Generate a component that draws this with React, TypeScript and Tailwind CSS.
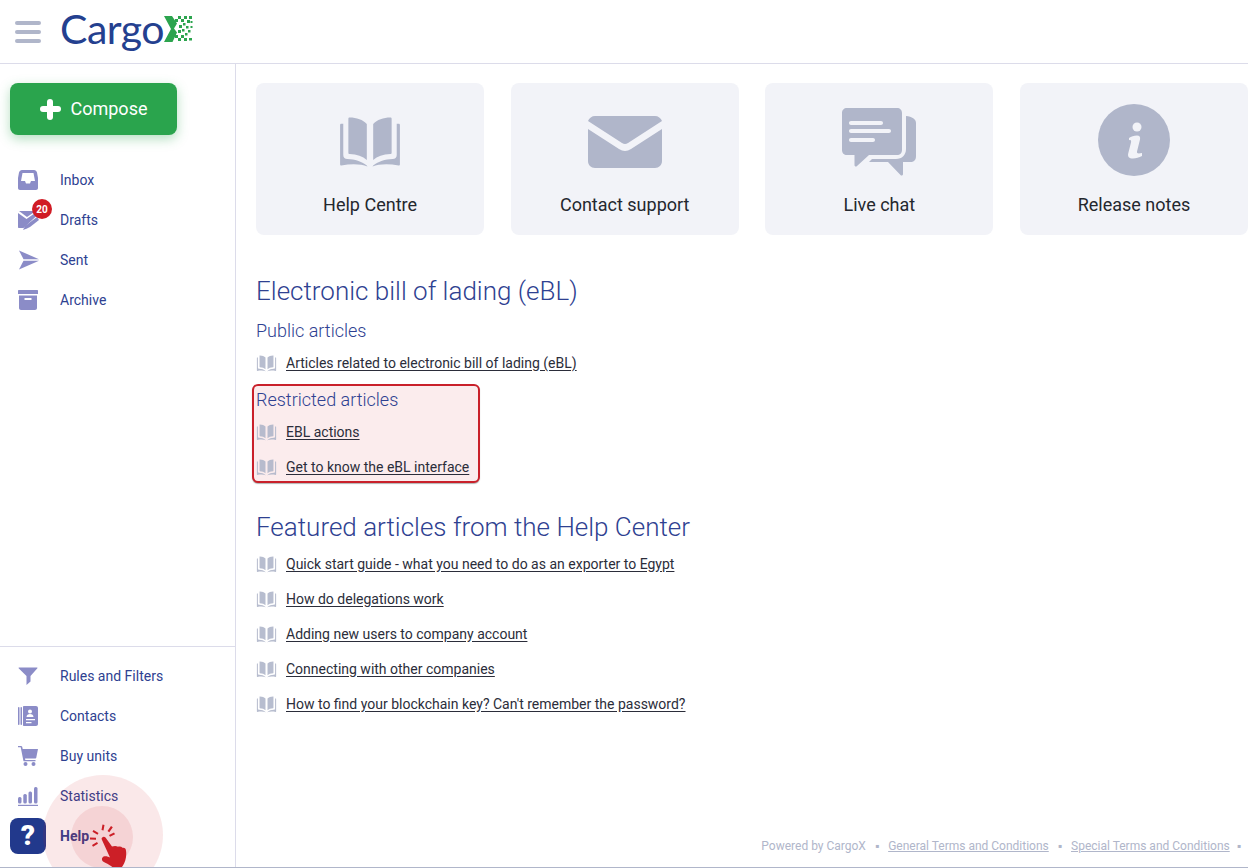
import type { ReactNode } from "react";

const BookPaths = () => (
  <>
    <path d="M8 3.5c5.500 0 10.500 1.800 13.500 5.200V37c-3.200-3-7.800-4.600-13.500-4.800-.7 0-1-.4-1-1V4.500c0-.6.4-1 1-1z" />
    <path d="M40 3.500c-5.500 0-10.500 1.800-13.500 5.200V37c3.200-3 7.800-4.600 13.500-4.800.7 0 1-.4 1-1V4.500c0-.6-.4-1-1-1z" />
    <path d="M1.500 8.500H3v24.500c0 2 1.300 3 3.200 3.100 6 .3 11 1.800 15.300 5.200l.500.700C17 40 9 39.800 1.500 41.300c-.7 0-1-.4-1-1V9.500c0-.6.400-1 1-1z" />
    <path d="M46.500 8.500H45v24.500c0 2-1.300 3-3.200 3.100-6 .3-11 1.800-15.300 5.200l-.5.700C31 40 39 39.800 46.500 41.300c.7 0 1-.4 1-1V9.500c0-.6-.4-1-1-1z" />
  </>
);

const BookIcon = ({ className }: { className: string }) => (
  <svg viewBox="0 0 48 44" className={className} fill="currentColor">
    <BookPaths />
  </svg>
);

const NavIcon = ({ name }: { name: string }) => {
  if (name === "inbox")
    return (
      <svg viewBox="0 0 20 20" className="w-5 h-5" fill="#8b8cc7">
        <path fillRule="evenodd" d="M4 0h12c1.500 0 2.500 1 3 2.500L20 8v10c0 1-.8 2-2 2H2c-1.200 0-2-1-2-2V8l1-5.500C1.500 1 2.500 0 4 0zm.5 3L3 11h4l1 2.500h4l1-2.500h4L15.500 3z" />
      </svg>
    );
  if (name === "drafts")
    return (
      <svg viewBox="0 0 22 22" className="w-[22px] h-[22px]" fill="#8b8cc7">
        <path d="M1 2h15l1 .5-8 5.500z" />
        <path d="M0 4l8.500 6 9-6.200 2 2.200L5.500 19H1c-.6 0-1-.4-1-1z" />
        <path d="M19 8l2 3-9 7-3 1.500L5 21l2-4z" />
      </svg>
    );
  if (name === "sent")
    return (
      <svg viewBox="0 0 20 20" className="w-[22px] h-5" fill="#8b8cc7">
        <path d="M0 .5L20 9.200H4.500z" />
        <path d="M0 19.500L20 10.800H4.500z" />
      </svg>
    );
  if (name === "archive")
    return (
      <svg viewBox="0 0 20 20" className="w-5 h-5" fill="#8b8cc7">
        <path d="M1 0h18c.6 0 1 .4 1 1v3H0V1c0-.6.4-1 1-1z" />
        <path fillRule="evenodd" d="M1 5.500h18V18c0 1.100-.9 2-2 2H3c-1.100 0-2-.9-2-2zM6.500 8v2h7V8z" />
      </svg>
    );
  if (name === "rules")
    return (
      <svg viewBox="0 0 20 20" className="w-5 h-5" fill="#8b8cc7">
        <path d="M1 1.500h18c.4 0 .6.400.4.800L12.500 10v5.500L8.500 19V10L.6 2.300c-.2-.4 0-.8.400-.8z" />
      </svg>
    );
  if (name === "contacts")
    return (
      <svg viewBox="0 0 20 20" className="w-5 h-5" fill="#8b8cc7">
        <rect x="0" y="1" width="1.500" height="18" rx=".7" />
        <rect x="2.500" y="1" width="1.500" height="18" rx=".7" />
        <path fillRule="evenodd" d="M6 0h12c1.100 0 2 .9 2 2v16c0 1.100-.9 2-2 2H6c-.6 0-1-.4-1-1V1c0-.6.4-1 1-1zm6 3.500a2 2 0 100 4 2 2 0 000-4zM8.500 11c0-1.800 1.500-3 3.500-3s3.500 1.200 3.500 3zm-.5 2v1.300h9V13zm0 3v1.300h5.500V16z" />
      </svg>
    );
  if (name === "cart")
    return (
      <svg viewBox="0 0 20 20" className="w-5 h-5" fill="#8b8cc7">
        <path d="M0 0h3c.6 0 1 .3 1.200.8L4.700 3H20l-1.700 8.500c-.1.600-.6 1-1.200 1H7l.3 1.500H17.500v1.300H6.200c-.4 0-.7-.2-.8-.6L2.700 1.300H0z" />
        <circle cx="7.500" cy="18" r="2" />
        <circle cx="15.500" cy="18" r="2" />
      </svg>
    );
  return (
    <svg viewBox="0 0 20 20" className="w-5 h-5" fill="#8b8cc7">
      <rect x="0" y="11" width="3.500" height="6.500" rx="1.500" />
      <rect x="5.300" y="8" width="3.500" height="9.500" rx="1.500" />
      <rect x="10.500" y="5.500" width="3.500" height="12" rx="1.500" />
      <rect x="16" y="1" width="3.500" height="16.500" rx="1.500" />
      <rect x="0" y="18.800" width="20" height="1.200" />
    </svg>
  );
};

const NavItem = ({ icon, label, badge }: { icon: string; label: string; badge?: string }) => (
  <div className="relative flex items-center h-10 pl-[18px]">
    <span className="w-[42px] flex items-center">
      <NavIcon name={icon} />
    </span>
    <span className="text-sm text-[#2e4191]">{label}</span>
    {badge && (
      <span className="absolute left-[32px] top-[-1px] flex items-center justify-center w-5 h-5 rounded-full bg-[#d01c25] text-white text-[10px] font-bold">
        {badge}
      </span>
    )}
  </div>
);

const Card = ({ label, children }: { label: string; children: ReactNode }) => (
  <div className="flex flex-col items-center h-[152px] rounded-lg bg-[#f2f3f8] pt-[19px]">
    <div className="h-[80px] flex items-center justify-center text-[#b0b6ca]">{children}</div>
    <span className="mt-[11px] text-[18px] leading-6 text-[#24272e]">{label}</span>
  </div>
);

const ArticleLink = ({ children }: { children: ReactNode }) => (
  <div className="flex items-center h-[35px]">
    <BookIcon className="w-[21px] h-[18px] text-[#b0b6ca] opacity-90 mr-[9px]" />
    <a className="text-sm text-[#2b2d3a] underline underline-offset-2">{children}</a>
  </div>
);

const Dot = () => <span className="mx-[9px] text-[#b0b6ca]">▪</span>;

const Logo = () => (
  <div className="flex items-center relative">
    <span className="font-['Lato',sans-serif] text-[41px] leading-none text-[#24408f] tracking-[-0.5px] mt-[-6px]">
      Cargo
    </span>
    <svg viewBox="0 0 29 26" className="w-[29px] h-[26px] mt-[-6px]" fill="#2ca44e">
      <path d="M0 0h8l5 7.500-3 5 3 4L8.500 26H0l7-13z" />
      <path d="M11 19h3v3h-3zM14 22h3v3h-3zM17 19h3v3h-3zM20 22h3v3h-3zM25 22h3v2.500h-3zM21 17h2.500v2.500H21zM24 14h2.500v2.500H24zM26.500 10h2v2h-2z" />
      <path d="M14 0h3v3h-3zM11 3h3v3h-3zM17 3h3v3h-3zM20 0h3v3h-3zM25 0h3v3h-3zM23 4h3v3h-3zM26.500 5h2v2h-2zM19 7h2.500v2.500H19zM15 9h3v3h-3zM22 10h2.500v2.500H22zM18 13h2.500v2.500H18zM14 14h3v3h-3z" />
    </svg>
  </div>
);

const Hand = () => (
  <svg viewBox="0 0 44 44" className="absolute left-[90px] top-[824px] w-[44px] h-[44px]" fill="#cc1f27">
    <path d="M12 16c-1.500-2 1.500-4.500 3.500-2.500l6.500 9c2-.8 4.500-.8 6 .2 2-.4 3.500 0 4.500 1 2-.3 3.500.5 3.500 3 .8 5.500-.500 11-3.500 15.500-1 1.500-3 1.800-5 1.800-3 0-5-.5-6.500-2-2-1.500-5-3-8-4.500-1.500-1.500-1.500-3.500.5-5 2.500-.8 4.500 0 6.500 1z" />
    <path d="M12.500 0.500l2 .5-1 5.500-2-.5zM21 2l1.800 1.200-3.500 5-1.800-1.200zM3.500 6l5 3-1 1.800-5-3zM0 13.500l6 .2v2l-6-.2zM24 8.500l1 1.800-5 2.500-1-1.800zM2 21l5-3 1 1.800-5 3z" />
  </svg>
);

export default function App() {
  return (
    <div className="relative h-[868px] overflow-hidden bg-white font-['Roboto',sans-serif] flex flex-col border-b border-[#b0b6ca]">
      <header className="flex items-center h-[64px] shrink-0 border-b border-[#dcdcea] pl-[15px]">
        <div className="w-[26px] flex flex-col gap-[5px] mr-[19px]">
          <span className="h-1 rounded-sm bg-[#b0b6ca]" />
          <span className="h-1 rounded-sm bg-[#b0b6ca]" />
          <span className="h-1 rounded-sm bg-[#b0b6ca]" />
        </div>
        <Logo />
      </header>

      <div className="flex flex-1 min-h-0">
        <aside className="w-[236px] shrink-0 border-r border-[#dcdcea] flex flex-col">
          <div className="pt-[19px] pl-[10px]">
            <button className="flex items-center justify-center w-[167px] h-[52px] rounded-lg bg-[#2aa44d] text-white text-lg shadow-[0_4px_12px_rgba(42,164,77,0.35)]">
              <span className="relative w-[21px] h-[21px] mr-[10px]">
                <span className="absolute left-[7.500px] top-0 w-[6px] h-[21px] rounded-sm bg-white" />
                <span className="absolute left-0 top-[7.500px] w-[21px] h-[6px] rounded-sm bg-white" />
              </span>
              Compose
            </button>
          </div>
          <nav className="mt-[25px]">
            <NavItem icon="inbox" label="Inbox" />
            <NavItem icon="drafts" label="Drafts" badge="20" />
            <NavItem icon="sent" label="Sent" />
            <NavItem icon="archive" label="Archive" />
          </nav>
          <nav className="mt-auto border-t border-[#dcdcea] pt-[9px] pb-[11px]">
            <NavItem icon="rules" label="Rules and Filters" />
            <NavItem icon="contacts" label="Contacts" />
            <NavItem icon="cart" label="Buy units" />
            <NavItem icon="stats" label="Statistics" />
            <div className="flex items-center h-10 pl-[10px]">
              <span className="w-[36px] h-[36px] mr-[14px] rounded-lg bg-[#22398c] flex items-center justify-center text-white text-[28px] font-black leading-none">
                ?
              </span>
              <span className="text-sm font-bold text-[#2e4191]">Help</span>
            </div>
          </nav>
        </aside>

        <main className="relative flex-1 pl-5 pt-[19px]">
          <div className="grid grid-cols-4 gap-x-[26.500px]">
            <Card label="Help Centre">
              <BookIcon className="w-[74px] h-[56px] mt-[-2px]" />
            </Card>
            <Card label="Contact support">
              <svg viewBox="0 0 74 52" className="w-[74px] h-[52px]" fill="currentColor">
                <path d="M7 0h60c3 0 6 2 7 5L40 27c-2 1.300-4 1.300-6 0L0 5c1-3 4-5 7-5z" />
                <path d="M0 13l31 20c4 2.500 8 2.500 12 0L74 13v32c0 4-3 7-7 7H7c-4 0-7-3-7-7z" />
              </svg>
            </Card>
            <Card label="Live chat">
              <svg viewBox="0 0 74 68" className="w-[74px] h-[68px]" fill="currentColor">
                <path fillRule="evenodd" d="M5 0h50c3 0 5 2 5 5v37c0 3-2 5-5 5H27L15 58c-1 1-2.500.500-2.500-1V47H5c-3 0-5-2-5-5V5c0-3 2-5 5-5zm4 13c-1.200 0-2 .8-2 2s.8 2 2 2h30c1.200 0 2-.8 2-2s-.8-2-2-2zm0 8c-1.200 0-2 .8-2 2s.8 2 2 2h38c1.200 0 2-.8 2-2s-.8-2-2-2zm0 9c-1.200 0-2 .8-2 2s.8 2 2 2h22c1.200 0 2-.8 2-2s-.8-2-2-2z" />
                <path d="M64 8c6 .5 10 3 10 7v33c0 4-2 6-6 6h-7v12c0 1.500-1.500 2-2.500 1L46 54H27l3-3h24c6 0 10-4 10-10z" />
              </svg>
            </Card>
            <Card label="Release notes">
              <svg viewBox="0 0 72 72" className="w-[72px] h-[72px] mt-[-4px]">
                <circle cx="36" cy="36" r="36" fill="currentColor" />
                <circle cx="39" cy="23" r="4.500" fill="#f2f3f8" />
                <path d="M31 34c2-1.500 5-2.500 8-2.500 2.500 0 3.500 1.500 3 4l-3 12c-.3 2 1 2.500 5 1.500v3c-3 1.500-6 2.500-9 2.500-4 0-5.500-2-4.800-5l2.800-11c.5-2.500-.5-3-2-2.300z" fill="#f2f3f8" />
              </svg>
            </Card>
          </div>

          <h2 className="mt-[38px] text-[26px] leading-9 font-light text-[#2e4191]">
            Electronic bill of lading (eBL)
          </h2>
          <h3 className="mt-[10px] text-lg leading-6 font-light text-[#2e4191]">Public articles</h3>
          <div className="mt-[2px]">
            <ArticleLink>Articles related to electronic bill of lading (eBL)</ArticleLink>
          </div>

          <div className="relative w-fit mt-[4px]">
            <div className="absolute left-[-4px] top-0 w-[228px] h-[99px] rounded-md border-2 border-[#c9202a] bg-[#fbeced] shadow-[0_1px_1px_rgba(0,0,0,0.3)]" />
            <div className="relative pt-1">
              <h3 className="text-lg leading-6 font-light text-[#2e4191]">Restricted articles</h3>
              <div className="mt-[2px]">
                <ArticleLink>EBL actions</ArticleLink>
                <ArticleLink>Get to know the eBL interface</ArticleLink>
              </div>
            </div>
          </div>

          <h2 className="mt-[25px] text-[26px] leading-9 font-light text-[#2e4191]">
            Featured articles from the Help Center
          </h2>
          <div className="mt-[1px]">
            <ArticleLink>Quick start guide - what you need to do as an exporter to Egypt</ArticleLink>
            <ArticleLink>How do delegations work</ArticleLink>
            <ArticleLink>Adding new users to company account</ArticleLink>
            <ArticleLink>Connecting with other companies</ArticleLink>
            <ArticleLink>How to find your blockchain key? Can't remember the password?</ArticleLink>
          </div>

          <footer className="absolute right-[7px] bottom-[13px] text-xs text-[#b0b6ca] whitespace-nowrap">
            Powered by CargoX
            <Dot />
            <a className="underline">General Terms and Conditions</a>
            <Dot />
            <a className="underline">Special Terms and Conditions</a>
            <span className="ml-[7px]">▪</span>
          </footer>
        </main>
      </div>

      {/* click highlight over the Help item */}
      <div className="absolute left-[43px] top-[775px] w-[120px] h-[120px] rounded-full bg-[#cc1f27]/10 pointer-events-none" />
      <div className="absolute left-[71px] top-[806px] w-[62px] h-[62px] rounded-full bg-[#cc1f27]/10 pointer-events-none" />
      <Hand />
    </div>
  );
}
